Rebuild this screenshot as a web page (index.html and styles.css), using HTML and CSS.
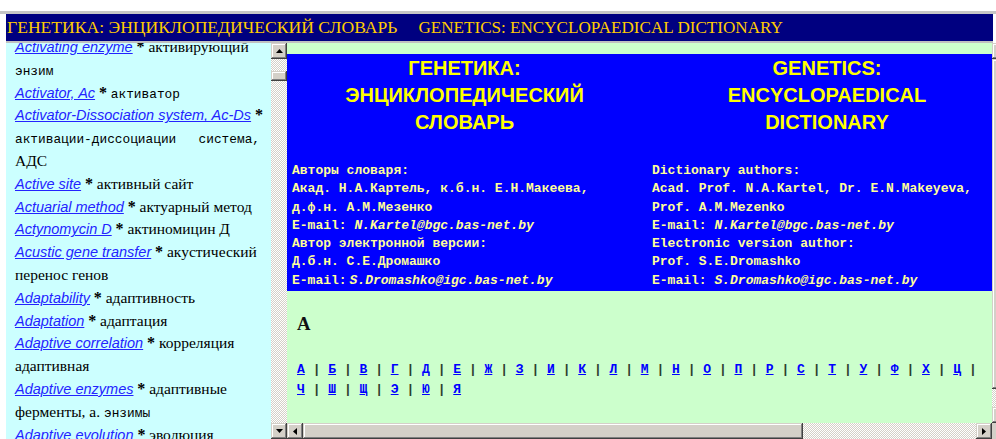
FILE: index.html
```html
<!DOCTYPE html>
<html lang="ru">
<head>
<meta charset="utf-8">
<title>Генетика: энциклопедический словарь</title>
<link rel="stylesheet" href="styles.css">
</head>
<body>
<div class="topbar"></div>
<div class="window">
  <header class="masthead">ГЕНЕТИКА: ЭНЦИКЛОПЕДИЧЕСКИЙ СЛОВАРЬ<span class="gap"></span><span class="en">GENETICS: ENCYCLOPAEDICAL DICTIONARY</span></header>

  <div class="frames">
    <!-- term index frame -->
    <div class="frame index-frame">
      <div class="index-view">
        <div class="index">
          <p><a href="#">Activating enzyme</a> <b class="star">*</b> активирующий<br><span class="alt">энзим</span></p>
          <p><a href="#">Activator, Ac</a> <b class="star">*</b> <span class="alt">активатор</span></p>
          <p><a href="#">Activator-Dissociation system, Ac-Ds</a> <b class="star">*</b><span class="spread"><span class="alt">активации-диссоциации</span> <span class="alt">система,</span></span>АДС</p>
          <p><a href="#">Active site</a> <b class="star">*</b> активный сайт</p>
          <p><a href="#">Actuarial method</a> <b class="star">*</b> актуарный метод</p>
          <p><a href="#">Actynomycin D</a> <b class="star">*</b> актиномицин Д</p>
          <p><a href="#">Acustic gene transfer</a> <b class="star">*</b> акустический<br>перенос генов</p>
          <p><a href="#">Adaptability</a> <b class="star">*</b> адаптивность</p>
          <p><a href="#">Adaptation</a> <b class="star">*</b> адаптация</p>
          <p><a href="#">Adaptive correlation</a> <b class="star">*</b> корреляция<br>адаптивная</p>
          <p><a href="#">Adaptive enzymes</a> <b class="star">*</b> адаптивные<br>ферменты, а. <span class="alt">энзимы</span></p>
          <p><a href="#">Adaptive evolution</a> <b class="star">*</b> эволюция<br>адаптивная</p>
        </div>
      </div>
      <div class="vscroll">
        <div class="sb-btn"><svg width="7" height="4" viewBox="0 0 7 4"><path d="M3.5 0L7 4H0Z"/></svg></div>
        <div class="sb-track"><div class="sb-thumb thumb-index"></div></div>
        <div class="sb-btn"><svg width="7" height="4" viewBox="0 0 7 4"><path d="M0 0H7L3.5 4Z"/></svg></div>
      </div>
    </div>

    <!-- main content frame -->
    <div class="frame main-frame">
      <div class="main-view">
        <section class="title-card">
          <div class="card-col">
            <h1 class="card-title">ГЕНЕТИКА:<br>ЭНЦИКЛОПЕДИЧЕСКИЙ<br>СЛОВАРЬ</h1>
            <p class="credits">Авторы словаря:<br>Акад. Н.А.Картель, к.б.н. Е.Н.Макеева,<br>д.ф.н. А.М.Мезенко<br>E-mail: <i>N.Kartel@bgc.bas-net.by</i><br>Автор электронной версии:<br>Д.б.н. С.Е.Дромашко<br>E-mail:<i class="tight">S.Dromashko@igc.bas-net.by</i></p>
          </div>
          <div class="card-col">
            <h1 class="card-title">GENETICS:<br>ENCYCLOPAEDICAL<br>DICTIONARY</h1>
            <p class="credits">Dictionary authors:<br>Acad. Prof. N.A.Kartel, Dr. E.N.Makeyeva,<br>Prof. A.M.Mezenko<br>E-mail: <i>N.Kartel@bgc.bas-net.by</i><br>Electronic version author:<br>Prof. S.E.Dromashko<br>E-mail: <i>S.Dromashko@igc.bas-net.by</i></p>
          </div>
        </section>

        <h2 class="letter-head">A</h2>

        <nav class="alphabet">
          <a href="#">А</a> <span class="sep">|</span> <a href="#">Б</a> <span class="sep">|</span> <a href="#">В</a> <span class="sep">|</span> <a href="#">Г</a> <span class="sep">|</span> <a href="#">Д</a> <span class="sep">|</span> <a href="#">Е</a> <span class="sep">|</span> <a href="#">Ж</a> <span class="sep">|</span> <a href="#">З</a> <span class="sep">|</span> <a href="#">И</a> <span class="sep">|</span> <a href="#">К</a> <span class="sep">|</span> <a href="#">Л</a> <span class="sep">|</span> <a href="#">М</a> <span class="sep">|</span> <a href="#">Н</a> <span class="sep">|</span> <a href="#">О</a> <span class="sep">|</span> <a href="#">П</a> <span class="sep">|</span> <a href="#">Р</a> <span class="sep">|</span> <a href="#">С</a> <span class="sep">|</span> <a href="#">Т</a> <span class="sep">|</span> <a href="#">У</a> <span class="sep">|</span> <a href="#">Ф</a> <span class="sep">|</span> <a href="#">Х</a> <span class="sep">|</span> <a href="#">Ц</a> <span class="sep">|</span><br>
          <a href="#">Ч</a> <span class="sep">|</span> <a href="#">Ш</a> <span class="sep">|</span> <a href="#">Щ</a> <span class="sep">|</span> <a href="#">Э</a> <span class="sep">|</span> <a href="#">Ю</a> <span class="sep">|</span> <a href="#">Я</a>
        </nav>
      </div>
      <div class="vscroll">
        <div class="sb-btn"><svg width="7" height="4" viewBox="0 0 7 4"><path d="M3.5 0L7 4H0Z"/></svg></div>
        <div class="sb-track"><div class="sb-thumb thumb-main"></div></div>
        <div class="sb-btn"><svg width="7" height="4" viewBox="0 0 7 4"><path d="M0 0H7L3.5 4Z"/></svg></div>
      </div>
      <div class="hscroll">
        <div class="sb-btn"><svg width="4" height="7" viewBox="0 0 4 7"><path d="M0 3.5L4 0V7Z"/></svg></div>
        <div class="sb-track"><div class="sb-thumb thumb-h"></div></div>
        <div class="sb-btn"><svg width="4" height="7" viewBox="0 0 4 7"><path d="M0 0L4 3.5L0 7Z"/></svg></div>
      </div>
      <div class="corner"></div>
    </div>
  </div>
</div>
</body>
</html>
```

FILE: styles.css
```css
html, body {
  margin: 0;
  padding: 0;
}

body {
  width: 996px;
  height: 439px;
  overflow: hidden;
  background: #ffffff;
}

.topbar {
  height: 11px;
  border-bottom: 3px solid #c6c6c6;
}

.window {
  margin-left: 6px;
  width: 1002px;
}

/* dark title bar across the top frame */
.masthead {
  width: 987px;
  height: 29px;
  box-sizing: border-box;
  padding-left: 1px;
  background: #000080;
  border-bottom: 2px solid #c0c0c0;
  color: #ffcc00;
  font: 17.6px/27px "Liberation Serif", "Times New Roman", serif;
  white-space: nowrap;
  overflow: hidden;
}

.masthead .gap {
  display: inline-block;
  width: 21px;
}

.masthead .en {
  font-size: 17.1px;
}

.frames {
  display: grid;
  grid-template-columns: 281px 721px;
  height: 396px;
}

/* ---------- left frame: term index ---------- */
.index-frame {
  display: grid;
  grid-template-columns: 265px 16px;
  min-height: 0;
}

.index-view {
  background: #ccffff;
  overflow: hidden;
}

.index {
  margin-top: -7px;
  padding: 0 9px 0 9px;
  font: 15.5px/22.8px "Liberation Serif", "Times New Roman", serif;
  color: #000000;
}

.index p {
  margin: 0;
  white-space: nowrap;
}

.index a {
  color: #2323ff;
  font: italic 14.5px/1 "Liberation Sans", Arial, sans-serif;
  text-decoration: underline;
}

.index .star {
  font: bold 16px/1 "Liberation Serif", "Times New Roman", serif;
}

.index .alt {
  font: 12.8px/1 "Liberation Mono", "Courier New", monospace;
}

.index .spread {
  display: block;
  margin-right: 2px;
  white-space: normal;
  text-align: justify;
  text-align-last: justify;
}

/* ---------- right frame: main page ---------- */
.main-frame {
  display: grid;
  grid-template-columns: 705px 16px;
  grid-template-rows: 380px 16px;
  min-height: 0;
}

.main-view {
  background: #ccffcc;
  overflow: hidden;
  padding-top: 11px;
  box-sizing: border-box;
}

.title-card {
  width: 720px;
  box-sizing: border-box;
  padding: 1px 0 1px 5px;
  background: #0000ff;
  display: grid;
  grid-template-columns: 345px 350px;
  column-gap: 15px;
}

.card-title {
  margin: 0;
  color: #ffff00;
  font: bold 20px/27px "Liberation Sans", Arial, sans-serif;
  text-align: center;
}

.credits {
  margin: 26px 0 0;
  color: #ffff99;
  font: bold 13px/18.3px "Liberation Mono", "Courier New", monospace;
  white-space: nowrap;
}

.credits i {
  font-style: italic;
}

.credits .tight {
  margin-left: 3px;
}

.letter-head {
  margin: 22px 0 0 10px;
  color: #111111;
  font: bold 18.72px "Liberation Serif", "Times New Roman", serif;
}

.alphabet {
  display: block;
  margin: 25px 0 0 10px;
  font: bold 13px/20px "Liberation Mono", "Courier New", monospace;
  white-space: nowrap;
}

.alphabet a {
  color: #0000ff;
  text-decoration: underline;
}

.alphabet .sep {
  color: #2f3f2f;
}

/* ---------- classic scrollbars ---------- */
.vscroll {
  display: flex;
  flex-direction: column;
  min-height: 0;
}

.hscroll {
  display: flex;
}

.sb-btn {
  flex: none;
  width: 16px;
  height: 16px;
  box-sizing: border-box;
  display: flex;
  align-items: center;
  justify-content: center;
  background: #d4d0c8;
  box-shadow: inset -1px -1px #404040, inset 1px 1px #d4d0c8,
              inset -2px -2px #808080, inset 2px 2px #ffffff;
}

.sb-btn svg {
  display: block;
  fill: #000000;
}

.sb-track {
  flex: 1;
  min-height: 0;
  min-width: 0;
  background: repeating-conic-gradient(#d4d0c8 0 25%, #ffffff 0 50%) 0 0 / 2px 2px;
}

.hscroll .sb-track {
  display: flex;
}

.sb-thumb {
  box-sizing: border-box;
  background: #d4d0c8;
  box-shadow: inset -1px -1px #404040, inset 1px 1px #d4d0c8,
              inset -2px -2px #808080, inset 2px 2px #ffffff;
}

.thumb-index {
  margin-top: 12px;
  height: 10px;
}

.thumb-main {
  height: 330px;
}

.thumb-h {
  width: 500px;
  height: 16px;
}

.corner {
  background: #d4d0c8;
}
```
